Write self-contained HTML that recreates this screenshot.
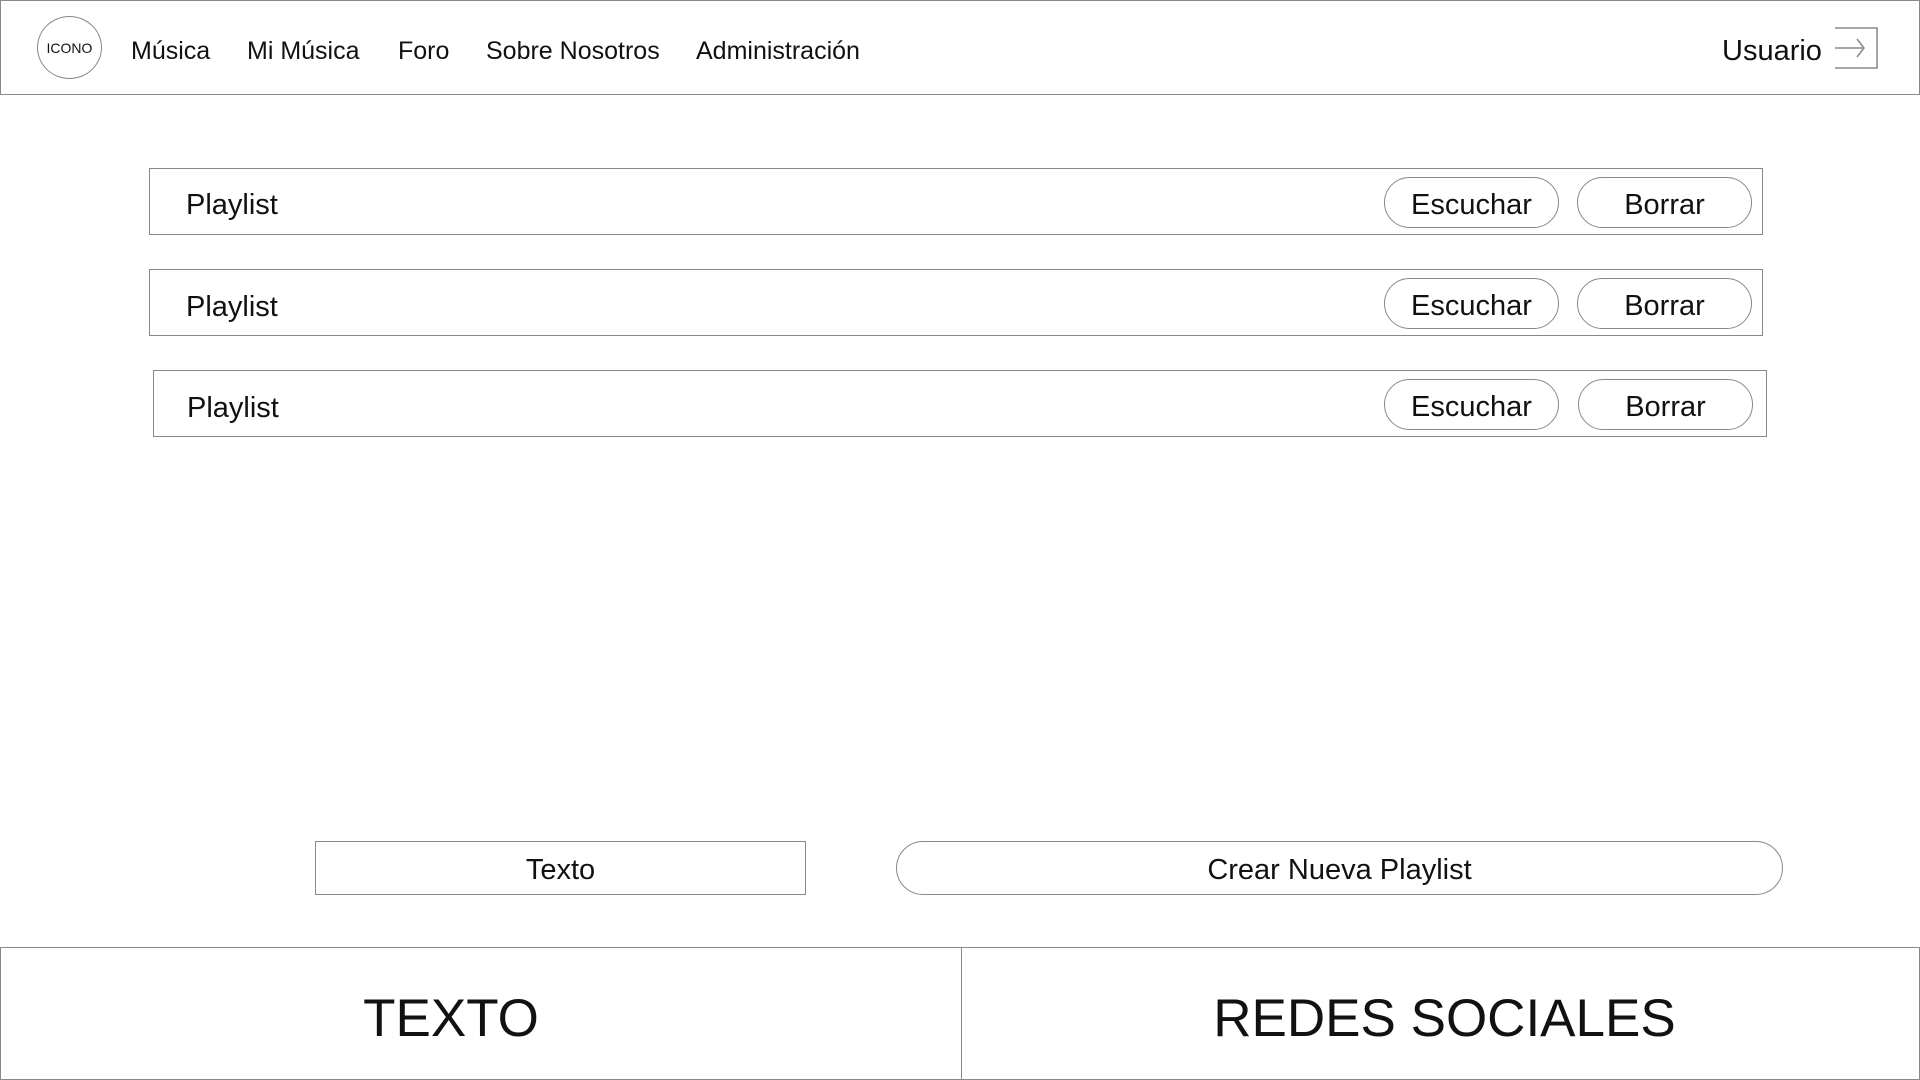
<!DOCTYPE html>
<html><head><meta charset="utf-8"><style>
*{box-sizing:border-box;margin:0;padding:0}
body{width:1920px;height:1080px;background:#fff;position:relative;font-family:"Liberation Sans",sans-serif;color:#111;overflow:hidden}
.a{position:absolute}
.hdr{left:0;top:0;width:1920px;height:95px;border:1px solid #888}
.circ{left:37px;top:16px;width:65px;height:63px;border:1px solid #888;border-radius:50%;font-size:14px;display:flex;align-items:center;justify-content:center}
.nav{top:37px;font-size:25px}
.row{border:1px solid #888;height:67px}
.pl{font-size:29px;left:36px;top:20px;position:absolute}
.btn{border:1px solid #888;border-radius:26px;height:51px;width:175px;font-size:29px;display:flex;align-items:center;justify-content:center;padding-top:5px}
.ft{top:947px;height:133px;border:1px solid #888;font-size:53px;padding-top:10px}
</style></head><body>
<div class="a hdr"></div>
<div class="a circ">ICONO</div>
<div class="a nav" style="left:131px">Música</div>
<div class="a nav" style="left:247px">Mi Música</div>
<div class="a nav" style="left:398px">Foro</div>
<div class="a nav" style="left:486px">Sobre Nosotros</div>
<div class="a nav" style="left:696px">Administración</div>
<div class="a" style="left:1722px;top:35px;font-size:29px">Usuario</div>
<svg class="a" style="left:1830px;top:24px" width="52" height="50"><path d="M5 4H47V44H5M5 24H34M27 15L34 24L27 33" fill="none" stroke="#888" stroke-width="1.5"/></svg>

<div class="a row" style="left:149px;top:168px;width:1614px"><span class="pl">Playlist</span></div>
<div class="a btn" style="left:1384px;top:177px">Escuchar</div>
<div class="a btn" style="left:1577px;top:177px">Borrar</div>
<div class="a row" style="left:149px;top:269px;width:1614px"><span class="pl" style="top:21px">Playlist</span></div>
<div class="a btn" style="left:1384px;top:278px">Escuchar</div>
<div class="a btn" style="left:1577px;top:278px">Borrar</div>
<div class="a row" style="left:153px;top:370px;width:1614px"><span class="pl" style="left:33px;top:21px">Playlist</span></div>
<div class="a btn" style="left:1384px;top:379px">Escuchar</div>
<div class="a btn" style="left:1578px;top:379px">Borrar</div>

<div class="a" style="left:315px;top:841px;width:491px;height:54px;border:1px solid #888;display:flex;align-items:center;justify-content:center;font-size:29px;padding-top:5px">Texto</div>
<div class="a" style="left:896px;top:841px;width:887px;height:54px;border:1px solid #888;border-radius:27px;display:flex;align-items:center;justify-content:center;font-size:29px;padding-top:5px">Crear Nueva Playlist</div>

<div class="a ft" style="left:0;width:962px;display:flex;align-items:center;justify-content:center;padding-right:60px">TEXTO</div>
<div class="a ft" style="left:961px;width:959px;display:flex;align-items:center;justify-content:center;padding-left:8px">REDES SOCIALES</div>
</body></html>
